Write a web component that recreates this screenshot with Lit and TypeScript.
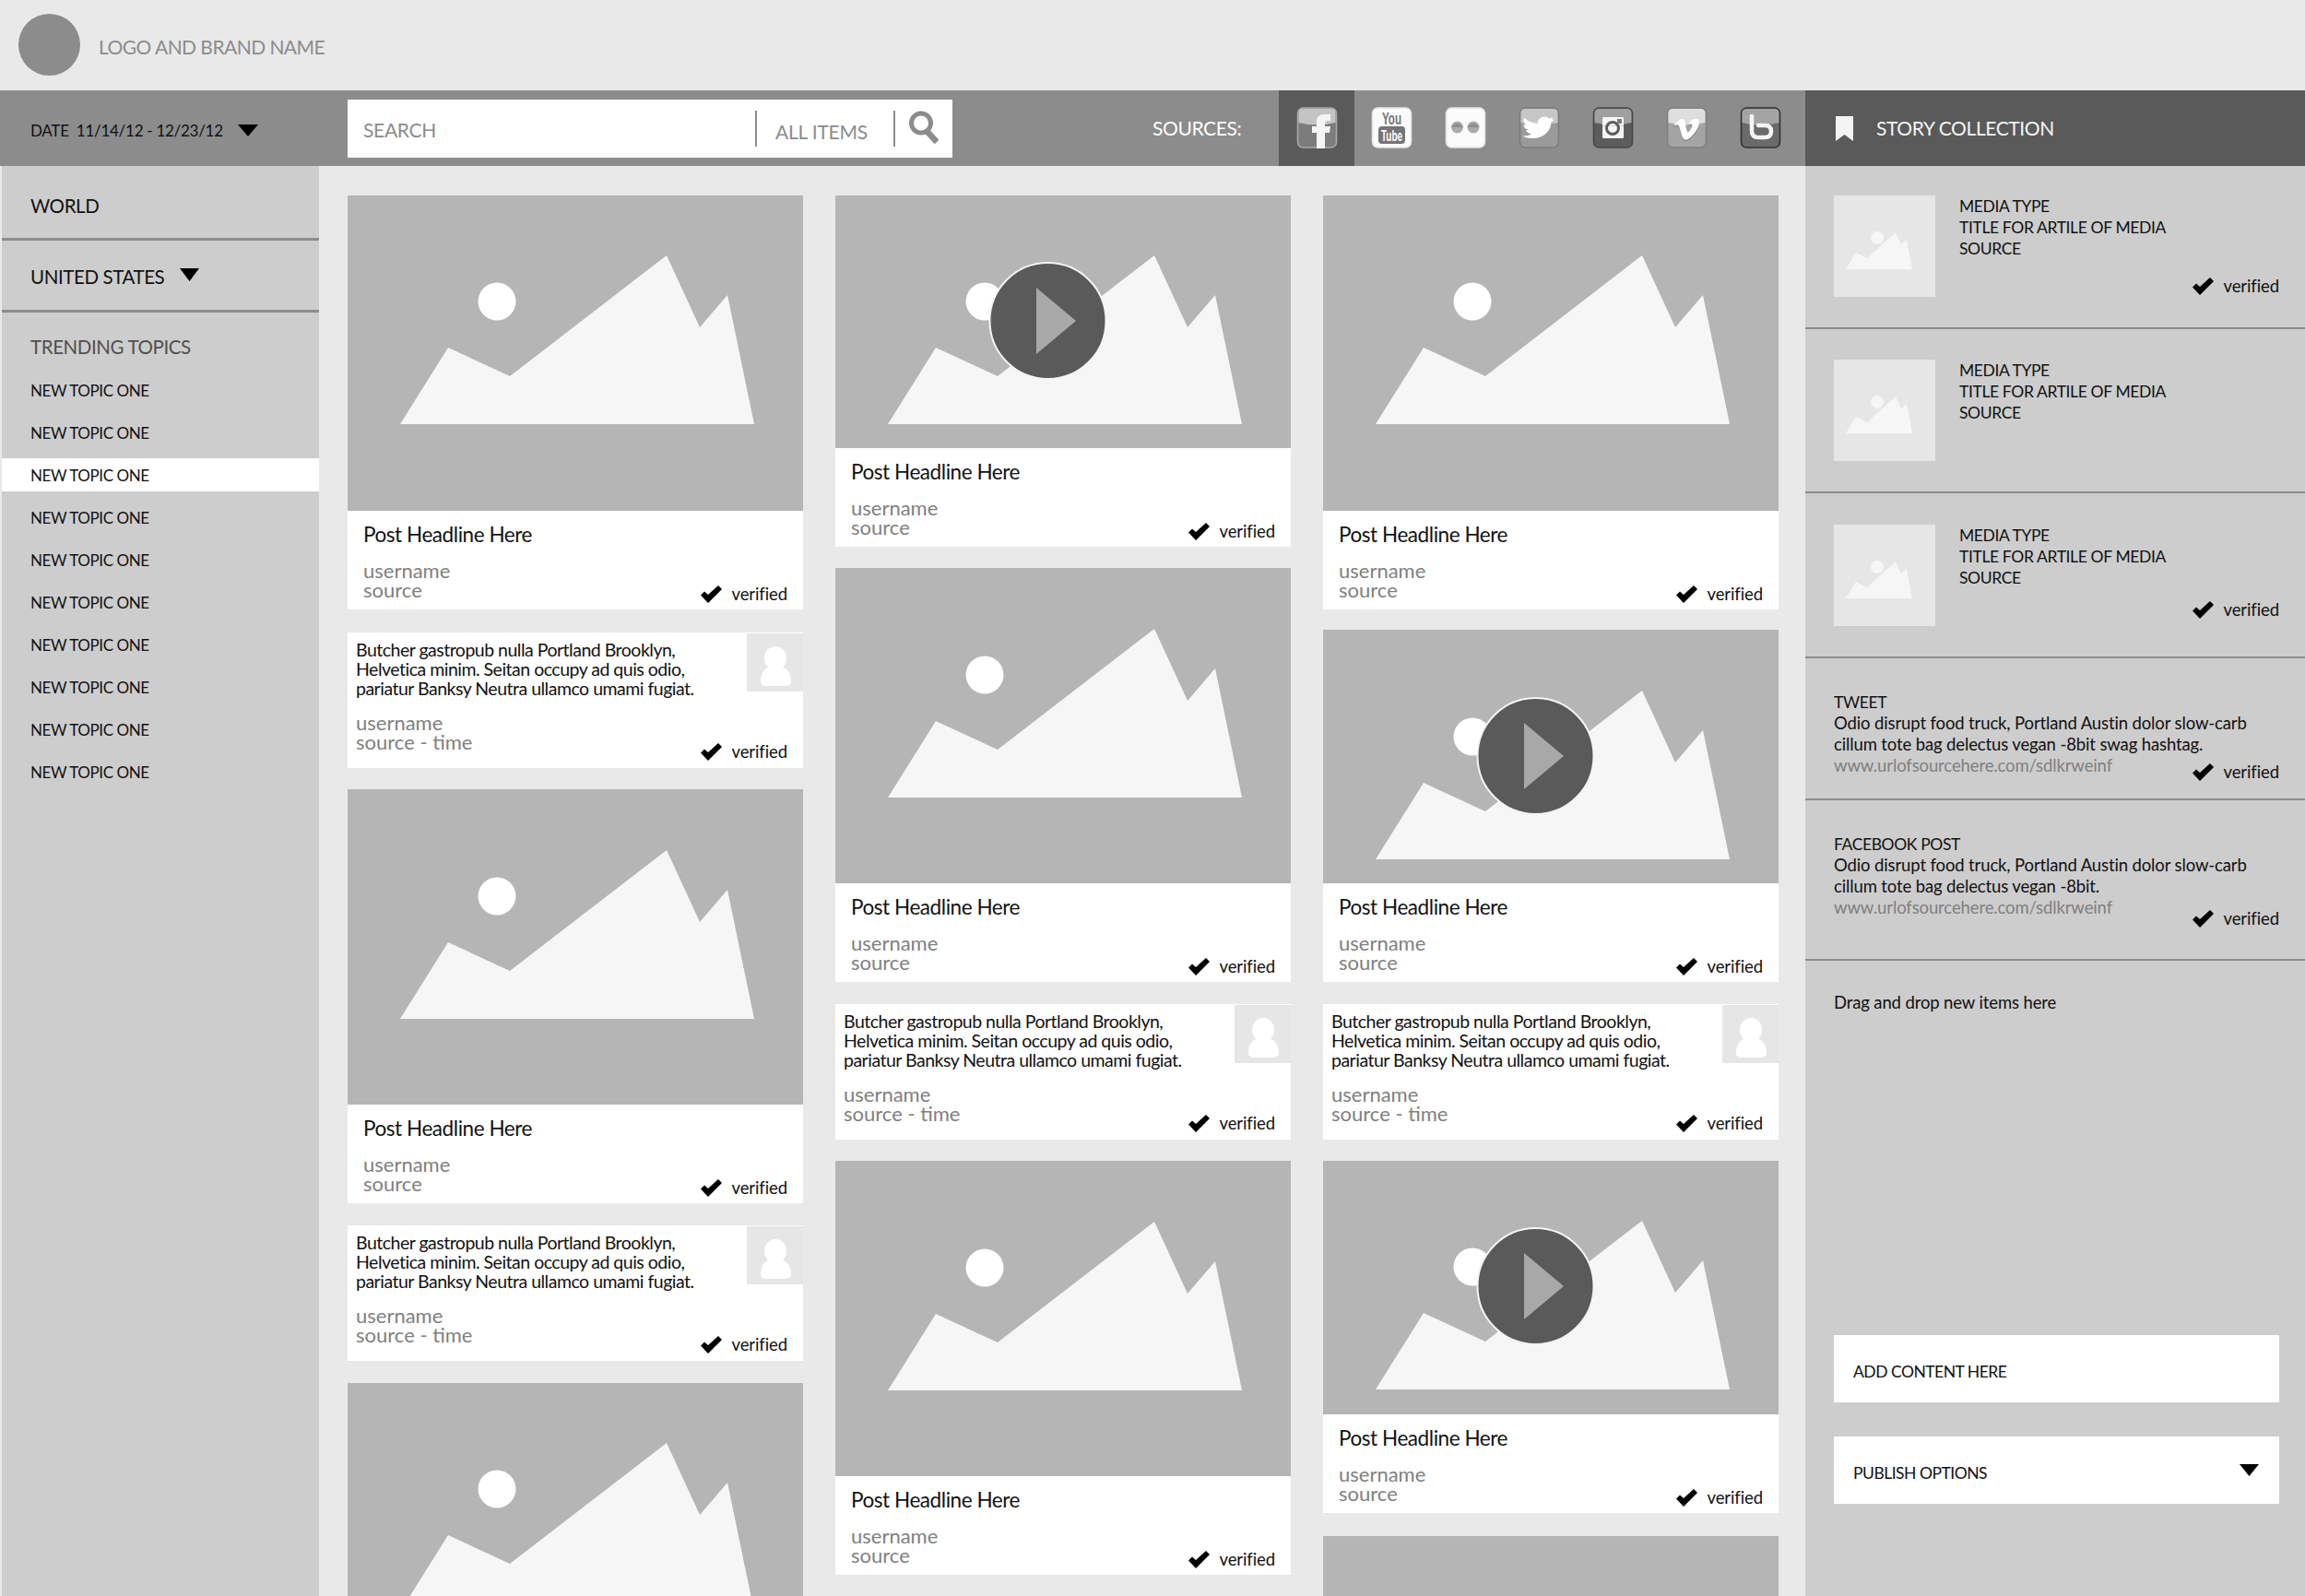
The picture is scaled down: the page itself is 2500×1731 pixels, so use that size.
import { LitElement, html, css, svg } from "lit";
import { customElement } from "lit/decorators.js";

const check = html`<svg class="chk" viewBox="0 0 23 19"><path d="M0 10.5 L4 6.5 L8 10 L19 0 L23 4 L8 19 Z" fill="#000"/></svg>`;
const verified = (mt = 0, mb = 0) => html`<div class="ver" style="margin-top:${mt}px;margin-bottom:${mb}px">${check}<span>verified</span></div>`;

const image = (h: number, play: boolean, dy = 0) => html`<svg class="pic" width="494" height="${h}" viewBox="0 ${-dy} 494 ${h}">
  <circle cx="162" cy="115" r="20.5" fill="#fff"/>
  <polygon points="57,248 109,165 176,196 346,65 382,143 412,108 441,248" fill="#f6f6f6"/>
  ${play ? svg`<circle cx="230.500" cy="136" r="63" fill="#5a5a5a" stroke="#f4f4f4" stroke-width="2"/>
  <polygon points="218,100 261,136 218,172" fill="#a8a8a8"/>` : ""}
</svg>`;

const post = (it: any) => html`<div class="item" style="margin-top:${it.mt}px">
  ${image(it.h, it.play, it.dy)}
  ${it.cut ? "" : html`<div class="meta">
    <div class="head">Post Headline Here</div>
    <div class="foot"><div class="names">username<br>source</div>${verified(26)}</div>
  </div>`}
</div>`;

const person = html`<svg class="person" viewBox="0 0 61 63"><ellipse cx="31" cy="27" rx="12" ry="13" fill="#fff"/><path d="M15 53 Q15 39 25 36 H37 Q48 39 48 53 Q48 57 40 57 H22 Q15 57 15 53Z" fill="#fff"/></svg>`;

const tweet = (it: any) => html`<div class="item tw" style="margin-top:${it.mt}px">
  <div class="twtop">
    <div class="twtext">Butcher gastropub nulla Portland Brooklyn,<br>Helvetica minim. Seitan occupy ad quis odio,<br>pariatur Banksy Neutra ullamco umami fugiat.</div>
    ${person}
  </div>
  <div class="twfoot"><div class="names">username<br>source - time</div>${verified(32)}</div>
</div>`;

const columns = [
  [
    { t: "p", mt: 0, h: 342 },
    { t: "w", mt: 25 },
    { t: "p", mt: 23, h: 342, dy: 1 },
    { t: "w", mt: 24 },
    { t: "p", mt: 24, h: 342, cut: true },
  ],
  [
    { t: "p", mt: 0, h: 274, play: true },
    { t: "p", mt: 23, h: 342, dy: 1 },
    { t: "w", mt: 24 },
    { t: "p", mt: 23, h: 342, dy: 1 },
  ],
  [
    { t: "p", mt: 0, h: 342 },
    { t: "p", mt: 22, h: 275, play: true, dy: 1 },
    { t: "w", mt: 24 },
    { t: "p", mt: 23, h: 275, play: true },
    { t: "p", mt: 25, h: 100, cut: true },
  ],
];

const gloss = (a: string) => svg`<path d="M2.5 17 V7 Q2.5 2 7.5 2 H37.5 Q42.5 2 42.5 7 V17 Q22 22 2.5 17Z" fill="${a}"/>`;
const box = (fill: string, stroke: string) => svg`<rect x="1.5" y="1" width="42" height="43" rx="6" fill="${fill}" stroke="${stroke}" stroke-width="1.6"/>`;
const vimeo = "M23.977 6.416c-.105 2.338-1.739 5.543-4.894 9.609-3.268 4.247-6.026 6.37-8.29 6.37-1.409 0-2.578-1.294-3.553-3.881L5.322 11.4C4.603 8.816 3.834 7.522 3.01 7.522c-.179 0-.806.378-1.881 1.132L0 7.197c1.185-1.044 2.351-2.084 3.501-3.128C5.08 2.701 6.266 1.984 7.055 1.91c1.867-.18 3.016 1.1 3.447 3.838.465 2.953.789 4.789.971 5.507.539 2.45 1.131 3.674 1.776 3.674.502 0 1.256-.796 2.265-2.385 1.004-1.589 1.54-2.797 1.612-3.628.144-1.371-.395-2.061-1.614-2.061-.574 0-1.167.121-1.777.391 1.186-3.868 3.434-5.757 6.762-5.637 2.473.06 3.628 1.664 3.493 4.797z";

const icons = [
  svg`${box("#7c7c7c", "#a9a9a9")}${gloss("#c4c4c4")}<path d="M22 45 V28 H17 V21 H22 V16 Q22 8 30 8 H37 V15 H33.500 Q31 15 31 17.500 V21 H37 L36 28 H31 V45Z" fill="#f4f4f4"/>`,
  svg`${box("#fbfbfb", "#e4e4e4")}<text x="22.500" y="19" class="yt" text-anchor="middle" fill="#757575" textLength="21" lengthAdjust="spacingAndGlyphs">You</text><rect x="8" y="21" width="29" height="19" rx="4" fill="#757575"/><text x="22.500" y="36.500" class="yt2" text-anchor="middle" fill="#fff" textLength="23" lengthAdjust="spacingAndGlyphs">Tube</text>`,
  svg`${box("#fbfbfb", "#e4e4e4")}<circle cx="13.500" cy="22" r="6.500" fill="#aaa"/><circle cx="31" cy="22" r="6.500" fill="#aaa"/><path d="M7.500 22 A6.500 6.500 0 0 1 19.500 22Z M25 22 A6.500 6.500 0 0 1 37 22Z" fill="#8e8e8e"/>`,
  svg`${box("#9a9a9a", "#7b7b7b")}${gloss("#c6c6c6")}<g transform="translate(4,8) scale(1.45,1.2)"><path d="M23.953 4.57a10 10 0 01-2.825.775 4.958 4.958 0 002.163-2.723c-.951.555-2.005.959-3.127 1.184a4.92 4.92 0 00-8.384 4.482C7.69 8.095 4.067 6.13 1.64 3.162a4.822 4.822 0 00-.666 2.475c0 1.71.87 3.213 2.188 4.096a4.904 4.904 0 01-2.228-.616v.06a4.923 4.923 0 003.946 4.827 4.996 4.996 0 01-2.212.085 4.936 4.936 0 004.604 3.417 9.867 9.867 0 01-6.102 2.105c-.39 0-.779-.023-1.17-.067a13.995 13.995 0 007.557 2.209c9.053 0 13.998-7.496 13.998-13.985 0-.21 0-.42-.015-.63A9.935 9.935 0 0024 4.59z" fill="#fff"/></g>`,
  svg`${box("#5c5c5c", "#474747")}${gloss("#a0a0a0")}<rect x="11" y="11" width="23" height="23" rx="1.500" fill="#f6f6f6"/><rect x="11" y="20" width="23" height="1" fill="#cfcfcf"/><circle cx="22" cy="23" r="6.500" fill="none" stroke="#5c5c5c" stroke-width="3"/><rect x="27" y="13" width="5" height="5" fill="#7a7a7a"/>`,
  svg`${box("#a4a4a4", "#7f7f7f")}${gloss("#dedede")}<g transform="translate(9,12.500) scale(1.125,1.1)"><path d="${vimeo}" fill="#6e6e6e" opacity="0.6"/></g><g transform="translate(9,11) scale(1.125,1.1)"><path d="${vimeo}" fill="#fff"/></g>`,
  svg`${box("#6a6a6a", "#333")}${gloss("#a4a4a4")}<path d="M13 10 V26 Q13 33 20 33 H27 Q34 33 34 26.500 Q34 20 27 20 H20" fill="none" stroke="#f6f6f6" stroke-width="4.500" stroke-linecap="round"/>`,
];

const smallThumb = html`<svg class="thumb" viewBox="0 0 110 110"><rect width="110" height="110" fill="#e6e6e6"/><circle cx="47" cy="46" r="7" fill="#f6f6f6"/><polygon points="13,80 24,62 36,68 67,40 73,53 79,48 85,80" fill="#f6f6f6"/></svg>`;

const mediaRows = [
  { h: 177, pt: 32, ver: true, mb: 2 },
  { h: 178, pt: 33, ver: false, mb: 0 },
  { h: 179, pt: 34, ver: true, mb: 8 },
];

@customElement("app-root")
export class AppRoot extends LitElement {
  static styles = css`
    :host { display: block; width: 2500px; height: 1731px; overflow: hidden; background: #e9e9e9; font-family: "Lato", sans-serif; color: #111; }
    .brand { height: 98px; display: flex; align-items: center; padding-left: 20px; box-sizing: border-box; background: #e9e9e9; }
    .logo { width: 67px; height: 67px; border-radius: 50%; background: #8c8c8c; margin-top: -1px; }
    .brandname { margin-left: 20px; font-size: 21px; letter-spacing: -0.55px; color: #8c8c8c; margin-top: 3px; white-space: nowrap; }

    .bar { height: 82px; display: flex; align-items: center; background: #8c8c8c; }
    .date { width: 377px; box-sizing: border-box; padding: 4px 0 0 33px; display: flex; align-items: center; font-size: 17px; letter-spacing: -0.27px; color: #111; white-space: nowrap; }
    .date span { flex: none; width: 225px; }
    .search { width: 656px; height: 63px; background: #fff; display: flex; align-items: center; box-sizing: border-box; }
    .sfield { flex: 1; padding-left: 17px; font-size: 21px; letter-spacing: -0.3px; color: #8c8c8c; margin-top: 3px; }
    .scope { width: 150px; height: 39px; box-sizing: border-box; border-left: 2px solid #8c8c8c; padding-left: 20px; font-size: 21px; letter-spacing: -0.2px; line-height: 45px; color: #8c8c8c; white-space: nowrap; }
    .sicon { width: 64px; height: 39px; box-sizing: border-box; border-left: 2px solid #8c8c8c; padding-left: 14px; }
    .sicon svg { width: 35px; height: 36px; display: block; }
    .sources { margin-left: 217px; width: 137px; color: #fff; font-size: 21px; letter-spacing: -0.4px; margin-top: -2px; }
    .cell { width: 80px; height: 82px; display: flex; align-items: center; justify-content: center; }
    .cell.on { width: 82px; background: #5a5a5a; }
    .cell svg { width: 45px; height: 46px; display: block; overflow: visible; }
    .yt { font: bold 18px "Liberation Sans", sans-serif; }
    .yt2 { font: bold 16px "Liberation Sans", sans-serif; }
    .story { margin-left: auto; width: 542px; height: 82px; background: #5a5a5a; display: flex; align-items: center; padding-left: 33px; box-sizing: border-box; color: #f4f4f4; font-size: 21px; letter-spacing: -0.4px; white-space: nowrap; }
    .story span { margin-top: -2px; }
    .story svg { width: 19px; height: 27px; margin-right: 25px; flex: none; }

    .body { display: flex; height: 1551px; }
    .side { margin-left: 2px; width: 344px; background: #cdcdcd; flex: none; }
    .sec { box-sizing: border-box; border-bottom: 3px solid #8c8c8c; padding: 7px 0 0 31px; display: flex; align-items: center; font-size: 20.5px; letter-spacing: -0.4px; }
    .sec.us { padding-top: 3px; }
    .sec svg { margin: -4px 0 0 17px; }
    .trend { margin: 22px 0 0 31px; height: 30px; line-height: 30px; font-size: 20.5px; letter-spacing: -0.4px; color: #505050; }
    .topics { margin-top: 14px; display: flex; flex-direction: column; gap: 10px; }
    .topic { height: 36px; line-height: 38px; padding-left: 31px; font-size: 17px; letter-spacing: -0.43px; white-space: nowrap; }
    .topic.on { background: #fff; }

    .main { width: 1612px; flex: none; display: flex; gap: 35px; padding: 32px 0 0 31px; box-sizing: border-box; overflow: hidden; }
    .col { width: 494px; flex: none; }
    .item { background: #fff; }
    .pic { display: block; background: #b5b5b5; }
    .meta { height: 107px; box-sizing: border-box; padding: 12px 17px 0 17px; }
    .head { font-size: 22.5px; letter-spacing: -0.44px; line-height: 28px; color: #111; white-space: nowrap; }
    .foot { display: flex; justify-content: space-between; margin-top: 14px; }
    .names { font-size: 22px; line-height: 21px; color: #808080; white-space: nowrap; }
    .ver { display: flex; align-items: center; font-size: 18.5px; letter-spacing: -0.1px; line-height: 20px; height: 20px; color: #111; white-space: nowrap; flex: none; }
    .chk { width: 23px; height: 19px; margin-right: 11px; flex: none; }
    .tw { height: 147px; box-sizing: border-box; padding-left: 9px; }
    .twtop { display: flex; justify-content: space-between; align-items: flex-start; }
    .twtext { padding-top: 8px; font-size: 19.5px; letter-spacing: -0.5px; line-height: 21px; color: #111; white-space: nowrap; }
    .person { width: 61px; height: 63px; background: #e6e6e6; margin-top: 1px; flex: none; display: block; }
    .twfoot { display: flex; justify-content: space-between; margin: 16px 17px 0 0; }

    .right { width: 542px; flex: none; background: #cdcdcd; display: flex; flex-direction: column; }
    .mrow { display: flex; box-sizing: border-box; border-bottom: 2px solid #8c8c8c; padding: 0 28px 0 31px; }
    .thumb { width: 110px; height: 110px; flex: none; display: block; }
    .mcol { flex: 1; height: 110px; margin-left: 26px; display: flex; flex-direction: column; }
    .lines { font-size: 18.5px; letter-spacing: -0.13px; line-height: 23px; color: #111; white-space: nowrap; }
    .caps { font-size: 17.5px; letter-spacing: -0.38px; }
    .mcol .ver { margin-top: auto !important; align-self: flex-end; }
    .trow { box-sizing: border-box; border-bottom: 2px solid #8c8c8c; padding: 36px 28px 0 31px; }
    .urlrow { display: flex; justify-content: space-between; align-items: flex-start; }
    .url { font-size: 18.5px; letter-spacing: -0.12px; line-height: 23px; color: #808080; white-space: nowrap; }
    .drag { padding: 34px 28px 0 31px; }
    .bottom { margin-top: auto; padding: 0 28px 100px 31px; display: flex; flex-direction: column; gap: 37px; }
    .btn { height: 73px; background: #fff; display: flex; align-items: center; justify-content: space-between; padding: 0 22px 0 21px; box-sizing: border-box; }
    .btn span { font-size: 17.5px; letter-spacing: -0.5px; padding-top: 5px; white-space: nowrap; }
  `;

  render() {
    const tri = (w: number, h: number) => html`<svg width="${w}" height="${h}" viewBox="0 0 22 13" preserveAspectRatio="none"><polygon points="0,0 22,0 11,13" fill="#000"/></svg>`;
    return html`
      <div class="brand"><div class="logo"></div><div class="brandname">LOGO AND BRAND NAME</div></div>
      <div class="bar">
        <div class="date"><span>DATE&nbsp; 11/14/12 - 12/23/12</span>${tri(22, 13)}</div>
        <div class="search">
          <div class="sfield">SEARCH</div>
          <div class="scope">ALL ITEMS</div>
          <div class="sicon"><svg viewBox="0 0 35 36"><circle cx="14" cy="13.500" r="10.500" fill="none" stroke="#8c8c8c" stroke-width="5"/><path d="M20 22 L31 34" stroke="#8c8c8c" stroke-width="6.500" fill="none"/></svg></div>
        </div>
        <div class="sources">SOURCES:</div>
        ${icons.map((ic, i) => html`<div class="cell ${i === 0 ? "on" : ""}"><svg viewBox="0 0 45 46">${ic}</svg></div>`)}
        <div class="story"><svg viewBox="0 0 19 27"><polygon points="0,0 19,0 19,27 9.500,20 0,27" fill="#f4f4f4"/></svg><span>STORY COLLECTION</span></div>
      </div>
      <div class="body">
        <div class="side">
          <div class="sec" style="height:81px">WORLD</div>
          <div class="sec us" style="height:78px">UNITED STATES ${tri(21, 14)}</div>
          <div class="trend">TRENDING TOPICS</div>
          <div class="topics">
            ${Array.from({ length: 10 }, (_, i) => html`<div class="topic ${i === 2 ? "on" : ""}">NEW TOPIC ONE</div>`)}
          </div>
        </div>
        <div class="main">
          ${columns.map((c) => html`<div class="col">${c.map((it: any) => (it.t === "p" ? post(it) : tweet(it)))}</div>`)}
        </div>
        <div class="right">
          ${mediaRows.map((r) => html`<div class="mrow" style="height:${r.h}px;padding-top:${r.pt}px">
            ${smallThumb}
            <div class="mcol"><div class="lines caps">MEDIA TYPE<br>TITLE FOR ARTILE OF MEDIA<br>SOURCE</div>${r.ver ? verified(0, r.mb) : ""}</div>
          </div>`)}
          <div class="trow" style="height:154px">
            <div class="lines"><span class="caps">TWEET</span><br>Odio disrupt food truck, Portland Austin dolor slow-carb<br>cillum tote bag delectus vegan -8bit swag hashtag.</div>
            <div class="urlrow"><div class="url">www.urlofsourcehere.com/sdlkrweinf</div>${verified(8)}</div>
          </div>
          <div class="trow" style="height:174px">
            <div class="lines"><span class="caps">FACEBOOK POST</span><br>Odio disrupt food truck, Portland Austin dolor slow-carb<br>cillum tote bag delectus vegan -8bit.</div>
            <div class="urlrow"><div class="url">www.urlofsourcehere.com/sdlkrweinf</div>${verified(13)}</div>
          </div>
          <div class="drag"><div class="lines">Drag and drop new items here</div></div>
          <div class="bottom">
            <div class="btn"><span>ADD CONTENT HERE</span></div>
            <div class="btn"><span>PUBLISH OPTIONS</span>${tri(21, 13)}</div>
          </div>
        </div>
      </div>
    `;
  }
}
